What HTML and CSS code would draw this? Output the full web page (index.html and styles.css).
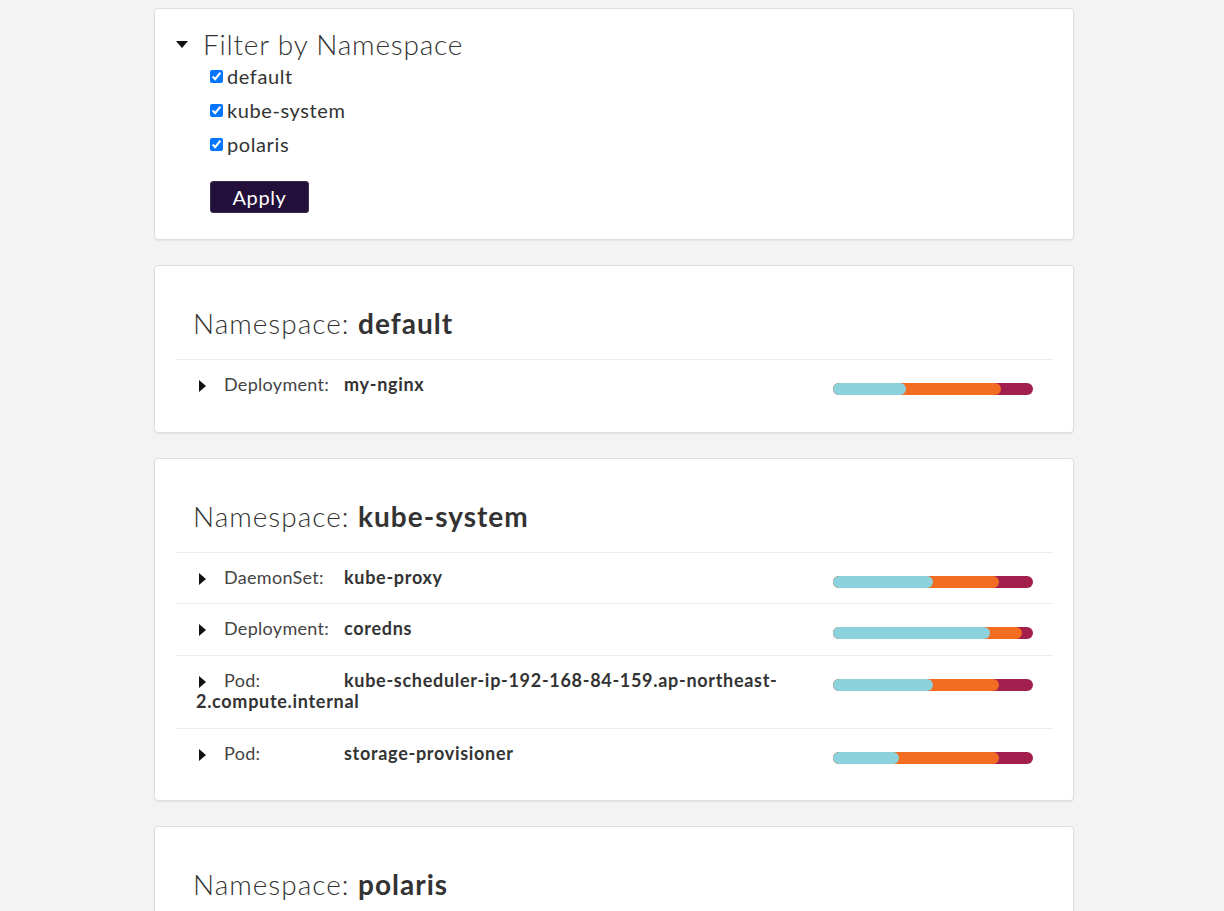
FILE: index.html
```html
<!DOCTYPE html>
<html>
<head>
<meta charset="utf-8">
<link rel="stylesheet" href="styles.css">
</head>
<body>
<div class="page">
  <div class="card filter">
    <div class="filter-head">
      <svg class="caret-down" width="12" height="7" viewBox="0 0 12 7"><path d="M0 0 L12 0 L6 7 Z" fill="#111"/></svg>
      <span>Filter by Namespace</span>
    </div>
    <div class="ns-list">
      <label class="ns-item"><input type="checkbox" checked>default</label>
      <label class="ns-item"><input type="checkbox" checked>kube-system</label>
      <label class="ns-item"><input type="checkbox" checked>polaris</label>
    </div>
    <button class="apply">Apply</button>
  </div>

  <div class="card ns">
    <h2 class="ns-title">Namespace: <strong>default</strong></h2>
    <div class="row">
      <div class="row-text"><svg class="caret" width="7" height="12" viewBox="0 0 7 12"><path d="M0 0 L7 6 L0 12 Z" fill="#111"/></svg><span class="kind">Deployment:</span><span class="name">my-nginx</span></div>
      <div class="bar"><div class="bar-warn" style="width:168px"><div class="bar-pass" style="width:73px"></div></div></div>
    </div>
  </div>

  <div class="card ns">
    <h2 class="ns-title">Namespace: <strong>kube-system</strong></h2>
    <div class="row">
      <div class="row-text"><svg class="caret" width="7" height="12" viewBox="0 0 7 12"><path d="M0 0 L7 6 L0 12 Z" fill="#111"/></svg><span class="kind">DaemonSet:</span><span class="name">kube-proxy</span></div>
      <div class="bar"><div class="bar-warn" style="width:166px"><div class="bar-pass" style="width:100px"></div></div></div>
    </div>
    <div class="row">
      <div class="row-text"><svg class="caret" width="7" height="12" viewBox="0 0 7 12"><path d="M0 0 L7 6 L0 12 Z" fill="#111"/></svg><span class="kind">Deployment:</span><span class="name">coredns</span></div>
      <div class="bar"><div class="bar-warn" style="width:189px"><div class="bar-pass" style="width:157px"></div></div></div>
    </div>
    <div class="row">
      <div class="row-text"><svg class="caret" width="7" height="12" viewBox="0 0 7 12"><path d="M0 0 L7 6 L0 12 Z" fill="#111"/></svg><span class="kind">Pod:</span><span class="name">kube-scheduler-ip-192-168-84-159.ap-northeast-2.compute.internal</span></div>
      <div class="bar"><div class="bar-warn" style="width:166px"><div class="bar-pass" style="width:100px"></div></div></div>
    </div>
    <div class="row">
      <div class="row-text"><svg class="caret" width="7" height="12" viewBox="0 0 7 12"><path d="M0 0 L7 6 L0 12 Z" fill="#111"/></svg><span class="kind">Pod:</span><span class="name">storage-provisioner</span></div>
      <div class="bar"><div class="bar-warn" style="width:166px"><div class="bar-pass" style="width:66px"></div></div></div>
    </div>
  </div>

  <div class="card ns">
    <h2 class="ns-title">Namespace: <strong>polaris</strong></h2>
  </div>
</div>
</body>
</html>
```

FILE: styles.css
```css
html, body {
  background: #f3f3f3;
}
body {
  margin: 8px;
  font-family: Lato, "Liberation Sans", sans-serif;
  color: #333;
}
.page {
  width: 920px;
  margin-left: calc(50% - 458px);
}
.card {
  background: #fff;
  border: 1px solid #dedede;
  border-radius: 4px;
  box-shadow: 0 1px 2px rgba(0,0,0,0.06);
  margin-bottom: 25px;
  box-sizing: border-box;
}
.filter {
  padding: 20px 20px 26px 21px;
}
.filter-head {
  display: flex;
  align-items: center;
  font-size: 28px;
  font-weight: 300;
  letter-spacing: 0.8px;
  line-height: 30px;
  color: #333;
}
.caret-down {
  margin-right: 15px;
}
.ns-list {
  margin-left: 34px;
}
.ns-item {
  display: flex;
  align-items: center;
  height: 34px;
  font-size: 20px;
  letter-spacing: 0.6px;
  color: #333;
}
.ns-item input {
  width: 13px;
  height: 13px;
  margin: 0 4px 0 0;
}
.apply {
  margin: 20px 0 0 34px;
  width: 99px;
  height: 32px;
  background: #23103a;
  color: #fff;
  border: 1px solid #3b2d4c;
  border-radius: 3px;
  font-family: Lato, "Liberation Sans", sans-serif;
  font-size: 20px;
  letter-spacing: 0.6px;
  padding: 0;
  display: block;
}
.ns {
  padding: 20px 20px 21px;
}
.ns-title {
  margin: 19px 0 18px 18px;
  font-size: 28px;
  line-height: 36px;
  font-weight: 300;
  letter-spacing: 1px;
  color: #333;
}
.ns-title strong {
  font-weight: 700;
}
.row {
  display: flex;
  align-items: flex-start;
  border-top: 1px solid #ececec;
  padding: 14px 20px 15px 21px;
}
.row-text {
  flex: 1;
  font-size: 18px;
  line-height: 21.5px;
  color: #333;
  padding-right: 20px;
}
.caret {
  margin-left: 3px;
  margin-right: 18px;
  vertical-align: -1px;
}
.kind {
  display: inline-block;
  width: 120px;
  color: #444;
  letter-spacing: 0.3px;
}
.name {
  font-weight: 700;
  letter-spacing: 0.7px;
  color: #333;
}
.bar {
  width: 200px;
  height: 12px;
  margin-top: 9px;
  background: #a31f4d;
  border-radius: 6px;
  flex: none;
}
.bar-warn {
  height: 12px;
  background: #f26c21;
  border-radius: 6px;
}
.bar-pass {
  height: 12px;
  background: #8bd2dc;
  border-radius: 6px;
}
```
